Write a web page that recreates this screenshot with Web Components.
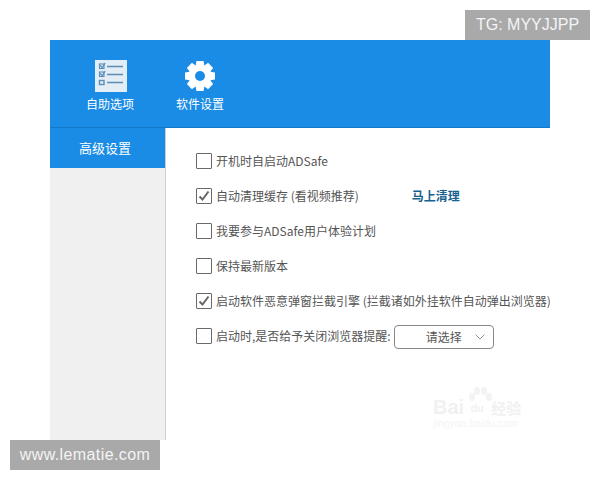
<!DOCTYPE html>
<html lang="zh"><head><meta charset="utf-8"><title>ADSafe</title>
<style>
html,body{margin:0;padding:0;background:#fff}
body{width:600px;height:480px;overflow:hidden;position:relative;font-family:"Noto Sans CJK SC","Liberation Sans",sans-serif}
</style></head><body>
<ad-window>
  <tool-tab slot="tabs" label="自助选项" icon="list"></tool-tab>
  <tool-tab slot="tabs" label="软件设置" icon="gear"></tool-tab>
  <side-item slot="side">高级设置</side-item>
  <opt-row checked="0">开机时自启动ADSafe</opt-row>
  <opt-row checked="1">自动清理缓存 (看视频推荐)<span slot="after" class="x">马上清理</span></opt-row>
  <opt-row checked="0">我要参与ADSafe用户体验计划</opt-row>
  <opt-row checked="0">保持最新版本</opt-row>
  <opt-row checked="1">启动软件恶意弹窗拦截引擎 (拦截诸如外挂软件自动弹出浏览器)</opt-row>
  <opt-row checked="0">启动时,是否给予关闭浏览器提醒:<sel-box slot="after">请选择</sel-box></opt-row>
</ad-window>
<baidu-mark></baidu-mark>
<wm-tag pos="tr">TG: MYYJJPP</wm-tag>
<wm-tag pos="bl">www.lematie.com</wm-tag>
<script>
function def(name, html){
  customElements.define(name, class extends HTMLElement{
    connectedCallback(){
      if(this.shadowRoot) return;
      const r=this.attachShadow({mode:'open'});
      r.innerHTML = typeof html==='function'?html(this):html;
    }
  });
}
def('ad-window',`<style>
:host{display:block;box-sizing:border-box;width:500px;height:400px;margin:40px 0 0 50px;background:#fff;overflow:hidden}
.head{height:87px;background:#1a8ce6;border-bottom:1px solid #1478c8;display:flex;padding-left:30px;gap:30px}
.body{display:flex;height:312px}
.side{width:115px;background:#f0f0f0;border-right:1px solid #cfcfcf;flex:none}
.main{flex:1;min-width:0;overflow:hidden;padding:15px 0 0 30px;display:flex;flex-direction:column}
</style><div class="head"><slot name="tabs"></slot></div>
<div class="body"><div class="side"><slot name="side"></slot></div><div class="main"><slot></slot></div></div>`);
const teeth=[0,45,90,135,180,225,270,315].map(a=>`<path d="M12.400 1h7.200l1 7h-9.200z" transform="rotate(${a} 16 16)"/>`).join('');
const icons={
list:`<svg style="margin-left:2px" width="32" height="32" viewBox="0 0 32 32"><rect width="32" height="32" fill="#e3edf5"/>
<g fill="none" stroke="#5a8db8"><rect x="4.500" y="4" width="4.500" height="4.500" stroke-width="1.100"/><rect x="4.500" y="12" width="4.500" height="4.500" stroke-width="1.100"/><rect x="4.500" y="20.500" width="4.500" height="4" stroke-width="1.400"/>
<path d="M12 6.500H28M12 14.500H28M12 22.500H28" stroke-width="1.700"/><path d="M5.200 5.500l2 2 3-4.500M5.200 13.500l2 2 3-4.500" stroke-width="1.200"/></g></svg>`,
gear:`<svg width="32" height="32" viewBox="0 0 32 32"><g fill="#fff">${teeth}<circle cx="16" cy="16" r="11.500"/></g><circle cx="16" cy="16" r="5" fill="#1a8ce6"/></svg>`};
def('tool-tab',h=>`<style>
:host{display:flex;flex-direction:column;align-items:center;width:60px;padding-top:20px;color:#fff;font-size:12px;line-height:16px}
svg{display:block;margin-bottom:4px}
</style>${icons[h.getAttribute('icon')]}<span>${h.getAttribute('label')}</span>`);
def('side-item',`<style>
:host{display:flex;align-items:center;justify-content:center;height:40px;background:#1a8ce6;color:#fff;font-size:13px;padding:0 5px 2px 0;box-sizing:border-box}
</style><slot></slot>`);
def('opt-row',h=>`<style>
:host{display:flex;align-items:center;height:35px;flex:none;white-space:nowrap;color:#555;font-size:12px}
.b{width:14px;height:14px;border:1.500px solid #6a6a6a;flex:none;margin:1px 4px 0 0;background:#fff;display:block;border-radius:1px}
::slotted(.x){color:#17618f;font-weight:700;margin-left:53px}
::slotted(sel-box){margin:2px 0 0 3px}
svg{display:block}
</style><span class="b">${h.getAttribute('checked')==='1'?'<svg width="14" height="14" viewBox="0 0 14 14"><path d="M2.500 7.500l3 3 6-8" fill="none" stroke="#666" stroke-width="2"/></svg>':''}</span><span><slot></slot></span><slot name="after"></slot>`);
def('sel-box',`<style>
:host{display:inline-flex;align-items:center;box-sizing:border-box;width:100px;height:24px;border:1px solid #888;border-radius:4px;background:#fff;color:#555;font-size:12px;padding-left:31px;position:relative}
svg{position:absolute;right:8px;top:8px}
</style><slot></slot><svg width="10" height="6" viewBox="0 0 10 6"><path d="M.5.5l4.500 4.500 4.500-4.500" fill="none" stroke="#999" stroke-width="1"/></svg>`);
def('wm-tag',h=>{const tr=h.getAttribute('pos')==='tr';return `<style>
:host{position:absolute;display:flex;align-items:center;justify-content:center;height:30px;background:#a9a9a9;color:#f4f4f4;font:16px/30px "Liberation Sans",sans-serif;${tr?'left:465px;top:10px;width:125px':'left:10px;top:440px;width:150px;letter-spacing:.4px'}}
</style><slot></slot>`});
def('baidu-mark',`<style>
:host{position:absolute;left:433px;top:384px;width:100px;height:46px;color:#f1f1f1;font-family:"Liberation Sans",sans-serif;pointer-events:none}
.a{position:absolute;left:0;top:12px;font-size:20px;font-weight:700;white-space:nowrap;display:flex;align-items:center}
.u{font-size:11px;margin:0 3px 0 2px;width:22px;text-align:center}
.c{font:700 15px "Noto Sans CJK SC",sans-serif}
.b{position:absolute;left:0;top:33px;font-size:10.500px;white-space:nowrap;color:#f4f4f4}
svg{position:absolute;left:34px;top:3px}
</style><svg width="26" height="22" viewBox="0 0 26 22" fill="#f3f3f3"><ellipse cx="5" cy="10" rx="3" ry="4"/><ellipse cx="10" cy="4" rx="3" ry="4"/><ellipse cx="17" cy="4" rx="3" ry="4"/><ellipse cx="22" cy="10" rx="3" ry="4"/></svg><div class="a">Bai<span class="u">du</span><span class="c">经验</span></div><div class="b">jingyan.baidu.com</div>`);
</script></body></html>
